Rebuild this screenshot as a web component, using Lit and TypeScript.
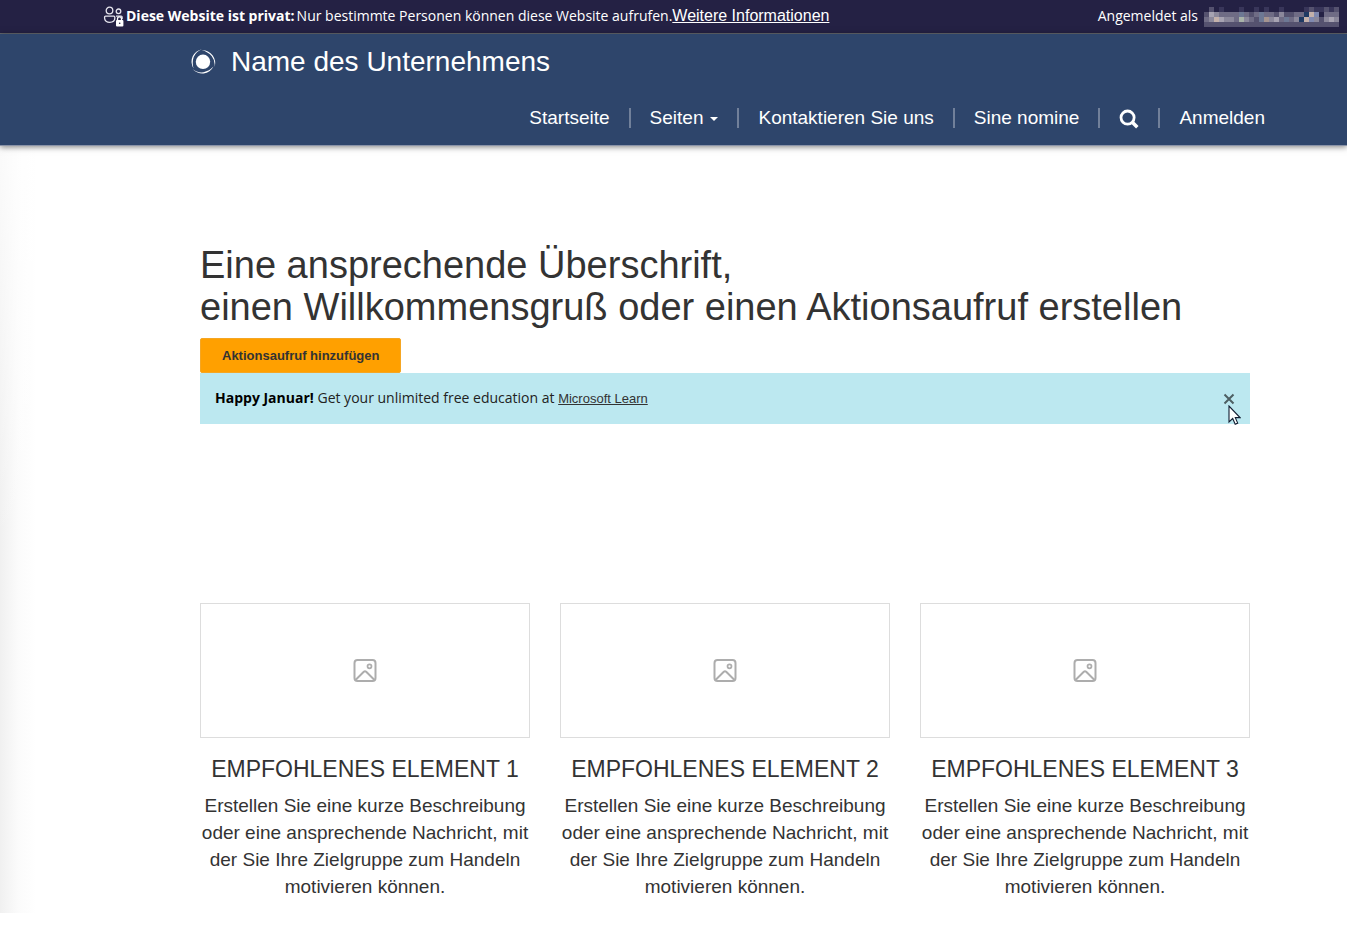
import { LitElement, html, css, svg } from "lit";
import { customElement, property, state } from "lit/decorators.js";

/* Colours of the redacted user name, one string per row, one letter per 5px cell. */
const PALETTE: Record<string, string> = {
  a: "#39365a", b: "#55526f", c: "#6f6c85", d: "#8b889b", e: "#a7a3b2",
  f: "#6d7894", g: "#a9b3a9", h: "#a59490", i: "#1f3a63", j: "#c4b1ab",
  k: "#8089b0", l: "#242144",
};
const MOSAIC_ROWS = [
  ".b.a...a..a.a..a....abaabab",
  "bedccccfcbcfccbdbbccijklccc",
  "cdjeddcgdcbfhdecfcdijkdbded",
  "bbbbbbbbbbbbbbbbbbbbbbbbbbb",
];

@customElement("private-bar")
export class PrivateBar extends LitElement {
  static styles = css`
    :host { display: block; }
    .bar {
      display: flex;
      align-items: center;
      height: 31px;
      padding: 0 1px 2px 103px;
      background: #242144;
      border-bottom: 1px solid #66696f;
      color: #fff;
      font: 14px/20px "Open Sans", "Noto Sans", sans-serif;
      white-space: nowrap;
      overflow: hidden;
    }
    .people { flex: none; width: 21px; height: 22px; margin: 2px 2px 0 0; }
    .note { display: flex; gap: 2px; margin: 0; }
    .more { color: #fff; font: 16px/20px "Liberation Sans", Arial, sans-serif; }
    .user { display: flex; align-items: center; gap: 6px; margin-left: auto; padding-right: 7px; }
    .name { width: 135px; height: 20px; margin-top: 2px; }
  `;
  render() {
    return html`<div class="bar">
      <svg class="people" viewBox="0 0 21 22" fill="none" stroke="#e6e5ee" stroke-width="1.3" aria-hidden="true">
        <circle cx="6.5" cy="4.500" r="3.3" />
        <circle cx="15.5" cy="5.300" r="2.3" />
        <path d="M2.6 10.1h8.2a1 1 0 0 1 1 1v1.2c0 2.4-2.2 4-5.1 4s-5.1-1.6-5.1-4v-1.2a1 1 0 0 1 1-1z" />
        <path d="M13 10.1h5.2a.9.9 0 0 1 .9.9V13" />
        <path d="M14.5 14.500v-1.6a2 2 0 0 1 4 0v1.600" stroke="#fff" />
        <rect x="13" y="14" width="7.4" height="6.6" rx="1" fill="#fff" stroke="none" />
        <circle cx="16.7" cy="17.2" r=".8" fill="#242144" stroke="none" />
      </svg>
      <p class="note"><strong>Diese Website ist privat:</strong> <span>Nur bestimmte Personen können diese Website aufrufen.</span></p>
      <a class="more" href="#info">Weitere Informationen</a>
      <div class="user">
        <span>Angemeldet als</span>
        <svg class="name" viewBox="0 0 135 20" shape-rendering="crispEdges" aria-hidden="true">
          ${MOSAIC_ROWS.map((row, y) => [...row].map((c, x) => c === "." ? null : svg`<rect x=${x * 5} y=${y * 5} width="5" height="5" fill=${PALETTE[c]} />`))}
        </svg>
      </div>
    </div>`;
  }
}

@customElement("site-header")
export class SiteHeader extends LitElement {
  static styles = css`
    :host { display: block; position: relative; }
    .header {
      padding-left: 103px;
      background: #2e456b;
      border-bottom: 1px solid #8a93a8;
      box-shadow: 0 1px 6px rgba(0, 0, 0, 0.5);
      color: #fff;
      font: 19px/27px "Liberation Sans", Arial, sans-serif;
    }
    .inner { max-width: 1080px; margin: 0 auto; padding: 12px 0 14px; }
    .brand { display: flex; align-items: center; gap: 14px; padding-left: 5px; color: #fff; font-size: 28px; line-height: 32px; text-decoration: none; }
    .logo { width: 27px; height: 27px; }
    nav { display: flex; justify-content: flex-end; margin-top: 26px; }
    ul { display: flex; margin: 0; padding: 0; list-style: none; }
    li { display: flex; align-items: center; }
    li + li::before { content: ""; width: 2px; height: 20px; margin: 0 19px; background: #71809a; }
    li a, li button { display: flex; align-items: center; color: #fff; text-decoration: none; font: inherit; }
    li button { padding: 0; border: 0; background: none; }
    .caret { margin: 2px 0 0 7px; border: 4px solid transparent; border-top-color: #fff; border-bottom: 0; }
    .search { width: 20px; height: 20px; margin-top: 3px; }
  `;
  render() {
    return html`<header class="header"><div class="inner">
      <a class="brand" href="#home">
        <svg class="logo" viewBox="0 0 27 27" fill="#fff" aria-hidden="true">
          <circle cx="13" cy="12.800" r="7.2" />
          ${[0, 120, 240].map((turn) => svg`<path transform="rotate(${turn} 13 12.800)" d="M12 .2A12.600 12.600 0 0 0 3.600 19.500A19 19 0 0 1 3.700 8A14 14 0 0 1 12 .2z" />`)}
        </svg>
        <span>Name des Unternehmens</span>
      </a>
      <nav aria-label="Hauptnavigation"><ul>
        <li><a href="#start">Startseite</a></li>
        <li><button type="button" aria-haspopup="true">Seiten<span class="caret"></span></button></li>
        <li><a href="#kontakt">Kontaktieren Sie uns</a></li>
        <li><a href="#sine">Sine nomine</a></li>
        <li><button type="button" aria-label="Suchen">
          <svg class="search" viewBox="0 0 21 21" fill="none" stroke="#fff"><circle cx="9" cy="9" r="6.900" stroke-width="2.900" /><path d="M14 14l5.200 5.200" stroke-width="3.700" /></svg>
        </button></li>
        <li><a href="#login">Anmelden</a></li>
      </ul></nav>
    </div></header>`;
  }
}

@customElement("feature-card")
export class FeatureCard extends LitElement {
  @property() heading = "";
  static styles = css`
    :host { display: block; text-align: center; }
    .picture { display: flex; align-items: center; justify-content: center; height: 133px; border: 1px solid #ddd; }
    .icon { width: 24px; height: 24px; }
    h2 { margin: 18px 0 9px; font-size: 23px; line-height: 27px; font-weight: 400; }
    p { margin: 0; font-size: 19px; line-height: 27px; }
  `;
  render() {
    return html`<article>
      <div class="picture">
        <svg class="icon" viewBox="0 0 24 24" fill="none" stroke="#adadad" stroke-width="2" aria-hidden="true">
          <rect x="1.500" y="1" width="21" height="21" rx="3" />
          <circle cx="16.500" cy="7.300" r="2" stroke-width="1.700" />
          <path d="M2.500 21l8.300-8.200a1.700 1.700 0 0 1 2.400 0L21.500 21" />
        </svg>
      </div>
      <h2>${this.heading}</h2>
      <p>Erstellen Sie eine kurze Beschreibung oder eine ansprechende Nachricht, mit der Sie Ihre Zielgruppe zum Handeln motivieren können.</p>
    </article>`;
  }
}

@customElement("app-root")
export class AppRoot extends LitElement {
  @state() private notice = true;
  static styles = css`
    :host { display: block; background: #fff; color: #333; font-family: "Liberation Sans", Arial, sans-serif; }
    main {
      padding: 98px 0 13px 103px;
      background:
        linear-gradient(to bottom, rgba(255, 255, 255, 0.7), rgba(255, 255, 255, 0) 400px),
        linear-gradient(to right, #f0f0f0, #fbfbfb 18px, #fff 36px);
    }
    .inner { max-width: 1050px; margin: 0 auto; }
    h1 { margin: 0 0 10px; font-size: 38px; line-height: 42px; font-weight: 400; }
    .cta { display: block; height: 35px; padding: 0 21px; border: 1px solid #f5a623; border-radius: 2px; background: #ffa000; color: #333; font: bold 13px/20px "Liberation Sans", Arial, sans-serif; }
    .notice { position: relative; display: flex; align-items: center; height: 51px; padding: 0 15px; background: #bce8f0; color: #222; font: 14px/20px "Open Sans", "Noto Sans", sans-serif; }
    .notice strong { color: #000; }
    .notice a { color: #333; font: 13px/20px "Liberation Sans", Arial, sans-serif; }
    .notice p { margin: 0; }
    .close { display: flex; margin-left: auto; padding: 0; border: 0; background: none; }
    .close svg { width: 12px; height: 12px; }
    .cursor { position: absolute; right: 9px; top: 32px; width: 13px; height: 21px; }
    .cards { display: grid; grid-template-columns: repeat(3, 1fr); gap: 30px; margin-top: 179px; }
  `;
  render() {
    return html`
      <private-bar></private-bar>
      <site-header></site-header>
      <main><div class="inner">
        <h1>Eine ansprechende Überschrift,<br />einen Willkommensgruß oder einen Aktionsaufruf erstellen</h1>
        <button class="cta" type="button">Aktionsaufruf hinzufügen</button>
        ${this.notice ? html`<div class="notice" role="status">
          <p><strong>Happy Januar!</strong> Get your unlimited free education at <a href="#learn">Microsoft Learn</a></p>
          <button class="close" type="button" aria-label="Schließen" @click=${() => (this.notice = false)}>
            <svg viewBox="0 0 12 12" stroke="#4d5f63" stroke-width="2"><path d="M1.500 1.500l9 9M10.500 1.500l-9 9" /></svg>
          </button>
          <svg class="cursor" viewBox="0 0 13 21" aria-hidden="true"><path d="M1 1v16l3.700-3.500 2.500 5.700 2.500-1.100-2.400-5.500H12z" fill="#fff" stroke="#111c30" stroke-width="1.100" /></svg>
        </div>` : null}
        <div class="cards">
          ${[1, 2, 3].map((n) => html`<feature-card heading="EMPFOHLENES ELEMENT ${n}"></feature-card>`)}
        </div>
      </div></main>`;
  }
}
